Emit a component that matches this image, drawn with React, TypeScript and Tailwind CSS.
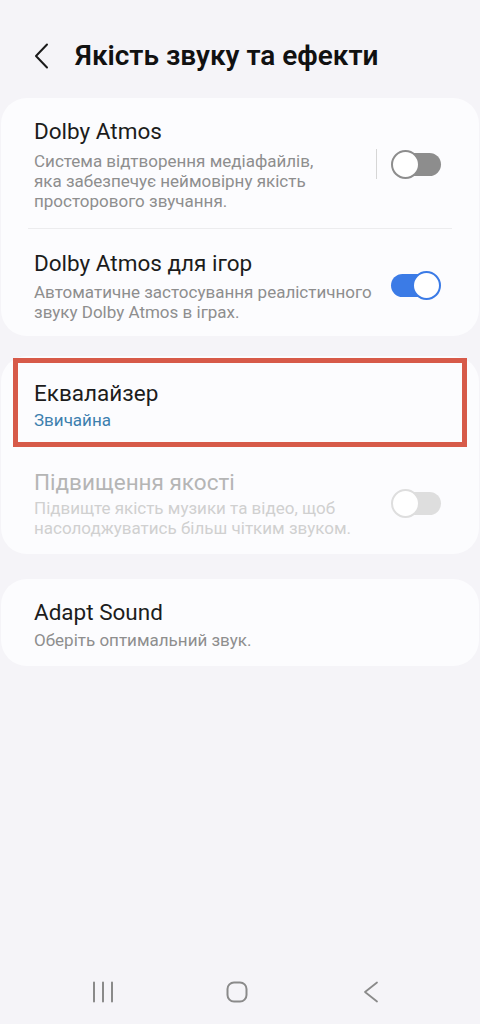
import { ReactNode } from "react"

function Toggle({ on, disabled }: { on?: boolean; disabled?: boolean }) {
  if (on) {
    return (
      <div className="relative h-[29px] w-[50px] shrink-0">
        <div className="absolute left-0 top-[3px] h-[23px] w-[46px] rounded-full bg-[#3b7be6]" />
        <div className="absolute right-0 top-0 h-[29px] w-[29px] rounded-full border-2 border-[#3b7be6] bg-white" />
      </div>
    )
  }
  const track = disabled ? "bg-[#dedede]" : "bg-[#8d8d8d]"
  const ring = disabled ? "border-[#dedede]" : "border-[#8d8d8d]"
  return (
    <div className="relative h-[29px] w-[50px] shrink-0">
      <div className={`absolute right-0 top-[3px] h-[23px] w-[46px] rounded-full ${track}`} />
      <div className={`absolute left-0 top-0 h-[29px] w-[29px] rounded-full border-2 bg-white ${ring}`} />
    </div>
  )
}

function Row({
  title,
  sub,
  right,
  muted,
  className,
  subMt = "mt-[5px]",
}: {
  title: string
  sub: ReactNode
  right?: ReactNode
  muted?: boolean
  className?: string
  subMt?: string
}) {
  return (
    <div className={`flex items-center gap-3 pl-[33px] pr-[38px] ${className ?? ""}`}>
      <div className="min-w-0 flex-1">
        <div className={`text-[22.5px] leading-[28px] ${muted ? "text-[#b5b5b5]" : "text-[#1c1c1c]"}`}>{title}</div>
        <div className={`${subMt} text-[17px] leading-[20px] ${muted ? "text-[#d0d0d0]" : "text-[#8e8e8e]"}`}>{sub}</div>
      </div>
      {right}
    </div>
  )
}

export default function App() {
  return (
    <div className="flex min-h-[1024px] flex-col bg-[#f5f4f8]" style={{ fontFamily: "Roboto, 'Noto Sans', sans-serif" }}>
      {/* Header */}
      <header className="flex h-[98px] items-center gap-[26px] pl-[34px] pt-[14px]">
        <svg width="15" height="26" viewBox="0 0 15 26" fill="none" stroke="#1a1a1a" strokeWidth="2" strokeLinecap="round" strokeLinejoin="round">
          <path d="M13 1.5 2 13l11 11.5" />
        </svg>
        <h1 className="text-[28px] font-semibold text-[#111]">Якість звуку та ефекти</h1>
      </header>

      {/* Dolby card */}
      <section className="mx-[1px] rounded-[26px] bg-[#fcfcfe]">
        <Row
          className="pb-[17px] pt-[19px]"
          subMt="mt-[6px]"
          title="Dolby Atmos"
          sub={
            <>
              Система відтворення медіафайлів,
              <br />
              яка забезпечує неймовірну якість
              <br />
              просторового звучання.
            </>
          }
          right={
            <div className="flex items-center gap-[14px]">
              <div className="h-[30px] w-px bg-[#d6d6d6]" />
              <Toggle />
            </div>
          }
        />
        <div className="mx-[27px] h-px bg-[#ececee]" />
        <Row
          className="pb-[14px] pt-[20px]"
          subMt="mt-[5px]"
          title="Dolby Atmos для ігор"
          sub={
            <>
              Автоматичне застосування реалістичного
              <br />
              звуку Dolby Atmos в іграх.
            </>
          }
          right={<Toggle on />}
        />
      </section>

      {/* Equalizer card */}
      <section className="mx-[1px] mt-[20px] rounded-[26px] bg-[#fcfcfe] pt-[2px]">
        <div className="mx-[12px] border-[5px] border-[#d75a49] pb-[12px] pl-[16px] pt-[16px]">
          <div className="text-[22.5px] leading-[28px] text-[#1c1c1c]">Еквалайзер</div>
          <div className="mt-[3px] text-[17px] leading-[20px] text-[#3d7fae]">Звичайна</div>
        </div>
        <Row
          className="pb-[16px] pt-[21px]"
          subMt="mt-[2px]"
          title="Підвищення якості"
          muted
          sub={
            <>
              Підвищте якість музики та відео, щоб
              <br />
              насолоджуватись більш чітким звуком.
            </>
          }
          right={<Toggle disabled />}
        />
      </section>

      {/* Adapt Sound */}
      <section className="mx-[1px] mt-[25px] rounded-[26px] bg-[#fcfcfe]">
        <Row className="pb-[16px] pt-[19px]" subMt="mt-[4px]" title="Adapt Sound" sub="Оберіть оптимальний звук." />
      </section>

      <div className="flex-1" />

      {/* Nav bar */}
      <nav className="flex h-[64px] items-center justify-center gap-[112px] pr-[6px]">
        <svg width="22" height="22" viewBox="0 0 22 22" stroke="#8a8a8a" strokeWidth="2" strokeLinecap="round">
          <path d="M2 1.5v19M11 1.5v19M20 1.5v19" />
        </svg>
        <svg width="22" height="22" viewBox="0 0 22 22" fill="none" stroke="#8a8a8a" strokeWidth="2">
          <rect x="1.5" y="1.5" width="19" height="19" rx="6.5" />
        </svg>
        <svg width="22" height="22" viewBox="0 0 22 22" fill="none" stroke="#8a8a8a" strokeWidth="1.8" strokeLinecap="round" strokeLinejoin="round">
          <path d="M17 1.5 5 11l12 9.5" />
        </svg>
      </nav>
    </div>
  )
}
